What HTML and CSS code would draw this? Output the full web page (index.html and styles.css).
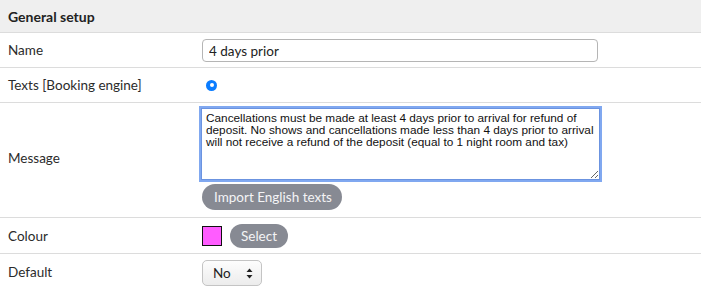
FILE: index.html
```
<!DOCTYPE html>
<html lang="en">
<head>
    <meta charset="UTF-8">
    <meta name="viewport" content="width=device-width, initial-scale=1.0">
    <title>Cancellation policy</title>
    <link rel="stylesheet" href="styles.css">
</head>
<body>

<table class="setup">
    <tr class="head">
        <th colspan="2">General setup</th>
    </tr>
    <tr class="row-name">
        <td class="label">Name</td>
        <td><input type="text" class="text-input" value="4 days prior"></td>
    </tr>
    <tr class="row-texts">
        <td class="label">Texts [Booking engine]</td>
        <td><span class="radio"></span></td>
    </tr>
    <tr class="row-message">
        <td class="label">Message</td>
        <td class="field">
            <textarea class="message focused" wrap="off">Cancellations must be made at least 4 days prior to arrival for refund of
deposit. No shows and cancellations made less than 4 days prior to arrival
will not receive a refund of the deposit (equal to 1 night room and tax)</textarea>
            <button class="pill">Import English texts</button>
        </td>
    </tr>
    <tr class="row-colour">
        <td class="label">Colour</td>
        <td>
            <div class="colour-pick">
                <span class="swatch"></span>
                <button class="pill">Select</button>
            </div>
        </td>
    </tr>
    <tr class="row-default">
        <td class="label">Default</td>
        <td>
            <div class="select-wrap">
                <select class="select">
                    <option>No</option>
                    <option>Yes</option>
                </select>
                <svg class="arrows" width="7" height="11" viewBox="0 0 7 11">
                    <path d="M3.5 0.5 L6.5 4 L0.5 4 Z" fill="#222"/>
                    <path d="M3.5 10.5 L6.5 7 L0.5 7 Z" fill="#222"/>
                </svg>
            </div>
        </td>
    </tr>
</table>

</body>
</html>
```

FILE: styles.css
```
body { margin: 0; font-family: Lato, "Open Sans", Arial, sans-serif; font-size: 13.5px; color: #2b2b2b; background: #fff; }
.setup { width: 100%; border-collapse: collapse; }
.setup th, .setup td { border-bottom: 1px solid #dcdcdc; padding: 0 4px; vertical-align: middle; text-align: left; }
.setup th { background: #efefef; height: 32px; padding-left: 8px; font-weight: 700; font-size: 14px; color: #222; }
.setup td.label { width: 186px; padding-left: 8px; }
.row-name td { height: 34px; }
.row-texts td { height: 34px; }
.row-message td { height: 114px; }
.row-message td.label { height: 110px; padding-bottom: 4px; }
.row-message td.field { height: 109px; padding-top: 5px; vertical-align: top; }
.row-colour td { height: 35px; }
.row-default td { height: 35px; border-bottom: none; }

.text-input { display: block; box-sizing: border-box; width: 396px; height: 23px; margin: 1px 0 0 0; padding: 0 6px; border: 1px solid #b5b5b5; border-radius: 4px; font: inherit; color: #222; }

.radio { display: block; width: 11px; height: 11px; margin: 0 0 0 4px; border-radius: 50%; background: #0a7cff; position: relative; }
.radio::after { content: ""; position: absolute; left: 3.5px; top: 3.5px; width: 4px; height: 4px; border-radius: 50%; background: #fff; }

.message { display: block; box-sizing: border-box; width: 399px; height: 72px; margin: 0 0 0 -1px; padding: 3px 0 3px 4px; border: 1px solid #9a9a9a; font-family: "Liberation Sans", Arial, sans-serif; font-size: 11.8px; line-height: 12px; color: #111; resize: both; overflow: hidden; }
.message.focused { outline: none; box-shadow: 0 0 0 2px #80a8f0; border-color: #6b93e0; }

.pill { display: block; height: 26px; padding: 0 12px; margin-top: 4px; border: none; border-radius: 13px; background: #878a93; color: #f4f4f6; font: inherit; font-size: 13.5px; white-space: nowrap; cursor: pointer; }
.row-message .pill { width: 140px; }

.colour-pick { display: flex; align-items: center; gap: 8px; }
.swatch { display: block; width: 18px; height: 18px; border: 1px solid #111; background: #ff5cff; }
.colour-pick .pill { margin: 0; width: 58px; height: 24px; padding: 0; }

.select-wrap { position: relative; width: 60px; height: 26px; margin-top: 2px; }
.select { appearance: none; -webkit-appearance: none; width: 60px; height: 26px; padding: 0 0 0 10px; border: 1px solid #c4c4c4; border-radius: 5px; background: linear-gradient(#fdfdfd, #ececec); font: inherit; color: #222; }
.arrows { position: absolute; right: 9px; top: 8px; pointer-events: none; }
```
